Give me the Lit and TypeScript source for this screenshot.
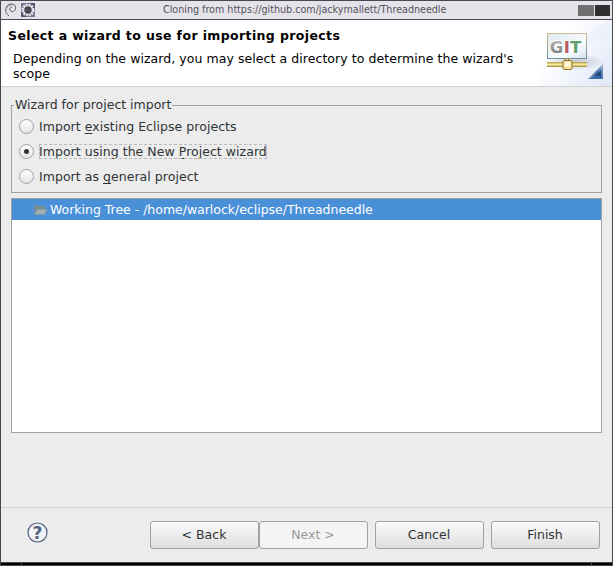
import { LitElement, html, css } from "lit";
import { customElement } from "lit/decorators.js";
import { classMap } from "lit/directives/class-map.js";

const debianIcon = html`<svg width="12" height="14" viewBox="0 0 12 14" fill="none" stroke="#605d65" stroke-linecap="round">
  <path stroke-width="1" d="M3.800 12.800C1.800 11.300.7 9.300.7 7 .7 3.500 3 1.100 6 1c2.900-.1 4.700 1.500 4.700 3.900C10.700 7.300 9 8.700 7.200 8.600 5.600 8.500 4.600 7.400 4.800 6 4.900 4.900 5.700 4.100 6.800 4.100"/>
  <path stroke-width=".6" d="M1.900 4.800C2.700 3 4.200 2 6.200 2"/></svg>`;

const eclipseIcon = html`<svg width="14" height="14" viewBox="0 0 14 14">
  <rect width="14" height="14" fill="#59516f"/><path d="M0 0h7L0 9zM14 14H8l6-7z" fill="#7d7395"/>
  <circle cx="7" cy="7" r="5.500" fill="none" stroke="#f2f0f5" stroke-width="2" stroke-dasharray="1.900 .98"/>
  <circle cx="7" cy="7" r="5.100" fill="#e6e4ec"/><circle cx="7" cy="7" r="3.700" fill="#45434d"/><path d="M3.500 6.500h7M3.500 8h7" stroke="#625e70" stroke-width=".5"/></svg>`;

const bannerArt = html`<svg width="73" height="66" viewBox="0 0 73 66">
  <defs>
    <linearGradient id="sky" x1="0" y1=".1" x2="1" y2=".8"><stop offset=".3" stop-color="#fff"/><stop offset="1" stop-color="#e2e9f8"/></linearGradient>
    <linearGradient id="panel" x1="0" y1="0" x2="1" y2="1"><stop offset="0" stop-color="#dfeaee"/><stop offset=".65" stop-color="#f8fbfd"/><stop offset="1" stop-color="#d3e2ec"/></linearGradient>
    <linearGradient id="frame" x1="0" y1="0" x2="0" y2="1"><stop offset="0" stop-color="#cfbd98"/><stop offset="1" stop-color="#738d96"/></linearGradient>
    <linearGradient id="wire" x1="0" y1="0" x2="0" y2="1"><stop offset="0" stop-color="#b29b3e"/><stop offset=".5" stop-color="#f7eda2"/><stop offset="1" stop-color="#a28934"/></linearGradient>
    <linearGradient id="corner" x1="0" y1="1" x2="1" y2="0"><stop offset="0" stop-color="#7fa3cf"/><stop offset=".55" stop-color="#4b74ae"/><stop offset="1" stop-color="#a3bddf"/></linearGradient>
    <radialGradient id="shade"><stop offset="0" stop-color="#747790" stop-opacity=".4"/><stop offset="1" stop-color="#747790" stop-opacity="0"/></radialGradient>
    <linearGradient id="grey" x1="0" y1="0" x2="0" y2="1"><stop offset="0" stop-color="#bcbcbc"/><stop offset="1" stop-color="#777"/></linearGradient>
  </defs>
  <rect width="73" height="66" fill="url(#sky)"/>
  <path d="M73 0C60 4 48 12 40 27c10-5 20-7 33-7z" fill="#e9effb" opacity=".6"/>
  <ellipse cx="36" cy="42" rx="30" ry="8" fill="url(#shade)"/>
  <rect x="8.500" y="13.500" width="39" height="25" fill="url(#panel)" stroke="url(#frame)"/>
  <g class="git"><text x="10.700" y="32.500" fill="url(#grey)">G</text><text x="24.800" y="32.500" fill="#b75c61">I</text><text x="31" y="32.500" fill="#5d9e6e">T</text></g>
  <rect x="8" y="42" width="40" height="5" fill="url(#wire)"/><path d="M26.500 38v3M29.500 38v3" stroke="#9b8337"/>
  <rect x="24" y="40.500" width="9" height="9" rx="1" fill="#f5df9b" stroke="#94752b"/><rect x="25.500" y="42" width="6" height="5" fill="#fff5cf"/>
  <path d="M49 59L64 44v15z" fill="url(#corner)"/><path d="M54 57l8-7v7z" fill="#24477f"/><path d="M51 58.500l4-2.500h6l3 3H49z" fill="#3d69a6"/></svg>`;

const folderIcon = html`<svg width="15" height="12" viewBox="0 0 15 12">
  <path d="M1 9V2q0-1 1-1h3l1 1h5q1 0 1 1v2H4z" fill="#7b8c92"/>
  <path d="M1.500 10.500L4.200 5.500h9.800l-2.500 5z" fill="#a0afb0" stroke="#82969b" stroke-width=".8"/></svg>`;

@customElement("wizard-button")
class WizardButton extends LitElement {
  static properties = { disabled: { type: Boolean, reflect: true } };
  static styles = css`
    :host { display: block; width: 109px; height: 28px; }
    button { width: 100%; height: 100%; padding: 0 1px 2px 0; border: 1px solid #a0a0a0; border-radius: 3px;
      background: linear-gradient(#fafafa, #dedede); color: #2e3436; font: inherit; letter-spacing: inherit; box-shadow: inset 0 1px #fff; }
    :host([disabled]) button { color: #96999a; background: #f4f4f4; box-shadow: none; }
  `;
  declare disabled: boolean;
  render() { return html`<button ?disabled=${this.disabled}><slot></slot></button>`; }
}

@customElement("app-root")
class AppRoot extends LitElement {
  static styles = css`
    :host { display: block; width: 613px; height: 566px; font: 12.500px/15px "DejaVu Sans", sans-serif; color: #2e3436; }
    * { box-sizing: border-box; }
    svg { display: block; }
    .window { display: flex; flex-direction: column; height: 563px; border: 1px solid #4a464d; background: #ececec; }
    .title { display: flex; align-items: center; height: 19px; border-bottom: 1px solid #4a464d; background: #e4e3ea; padding: 0 2px 0 4px; flex: none; }
    .apps { display: flex; gap: 4px; width: 158px; align-items: center; }
    .name { font-size: 9.600px; letter-spacing: -.02px; color: #55525a; flex: 1; white-space: nowrap; line-height: 18px; }
    .controls { display: flex; gap: 1px; }
    .controls i { width: 16px; height: 11px; background: #707070; }
    .controls i:last-child { width: 15px; background: #303030; }
    .header { display: flex; justify-content: space-between; height: 67px; background: white; border-bottom: 1px solid #d2d2d2; flex: none; color: #000; }
    .copy { padding: 8px 0 0 7px; width: 535px; white-space: nowrap; }
    h1 { font-size: 12.500px; line-height: 15px; margin: 0 0 8px; letter-spacing: .38px; }
    p { margin: 0 0 0 5px; letter-spacing: .06px; }
    .git { font: bold 17.500px "DejaVu Sans", sans-serif; font-size: 16.500px; stroke: white; stroke-width: 1.500px; paint-order: stroke; }
    .content { padding: 11px 10px 0; flex: 1; }
    fieldset { margin: 0; border: 1px solid #a0a0a0; padding: 0 7px; height: 95px; min-width: 0; }
    legend { padding: 0 1px; margin-left: -5px; height: 15px; line-height: 13px; }
    .options { padding-top: 1px; }
    .option { display: flex; align-items: center; height: 25px; gap: 5px; letter-spacing: .04px; }
    .radio { display: grid; place-items: center; width: 15px; height: 15px; border: 1px solid #a0a0a0; border-radius: 50%; background: linear-gradient(#fff, #e4e4e4); }
    .checked .radio::after { content: ""; width: 5px; height: 5px; border-radius: 50%; background: #2e3436; }
    .label { line-height: 15px; outline: 1px dashed transparent; outline-offset: -1px; }
    .checked .label { outline-color: #b9bbbb; }
    u { text-underline-offset: 2px; text-decoration-thickness: 1px; text-decoration-skip-ink: none; }
    .tree { height: 235px; margin-top: 5px; border: 1px solid #a0a0a0; background: white; }
    .row { display: flex; align-items: center; gap: 2px; height: 21px; background: #4a90d9; color: white; padding-left: 21px; letter-spacing: -.02px; }
    .footer { display: flex; height: 55px; border-top: 1px solid #d2d2d2; padding: 13px 11px 0 26px; flex: none; }
    .help { width: 21px; height: 21px; margin-right: 102px; margin-top: 1px; }
    .help text { font: bold 17px "DejaVu Sans", sans-serif; }
    .buttons { display: flex; gap: 7px; }
    .pair { display: flex; }
    .edge { height: 3px; background: #000; border-bottom: 1px solid #4a464d; border-left: 1px solid #4a464d; border-right: 1px solid #4a464d; display: flex; justify-content: space-between; padding: 0 20px; }
    .edge i { width: 1px; background: #4a464d; }
  `;

  options = [
    { before: "Import ", key: "e", after: "xisting Eclipse projects", checked: false },
    { before: "Import using the New ", key: "P", after: "roject wizard", checked: true },
    { before: "Import as ", key: "g", after: "eneral project", checked: false },
  ];

  render() {
    return html`<div class="window">
      <div class="title"><div class="apps">${debianIcon}${eclipseIcon}</div>
        <span class="name">Cloning from https://github.com/jackymallett/Threadneedle</span><div class="controls"><i></i><i></i></div></div>
      <header class="header"><div class="copy"><h1>Select a wizard to use for importing projects</h1>
        <p>Depending on the wizard, you may select a directory to determine the wizard's<br>scope</p></div>${bannerArt}</header>
      <main class="content"><fieldset><legend>Wizard for project import</legend><div class="options">
        ${this.options.map(o => html`<div class=${classMap({ option: true, checked: o.checked })}><span class="radio"></span><span class="label">${o.before}<u>${o.key}</u>${o.after}</span></div>`)}
      </div></fieldset><div class="tree"><div class="row">${folderIcon}<span>Working Tree - /home/warlock/eclipse/Threadneedle</span></div></div></main>
      <footer class="footer"><svg class="help" viewBox="0 0 21 21"><circle cx="10.500" cy="10.500" r="9.500" fill="#f0f2f5" stroke="#52617e" stroke-width="1.200"/><text x="10.500" y="16.700" text-anchor="middle" fill="#52617e">?</text></svg>
        <div class="buttons"><div class="pair"><wizard-button>&lt; Back</wizard-button><wizard-button disabled>Next &gt;</wizard-button></div><wizard-button>Cancel</wizard-button><wizard-button>Finish</wizard-button></div></footer>
    </div><div class="edge"><i></i><i></i></div>`;
  }
}
